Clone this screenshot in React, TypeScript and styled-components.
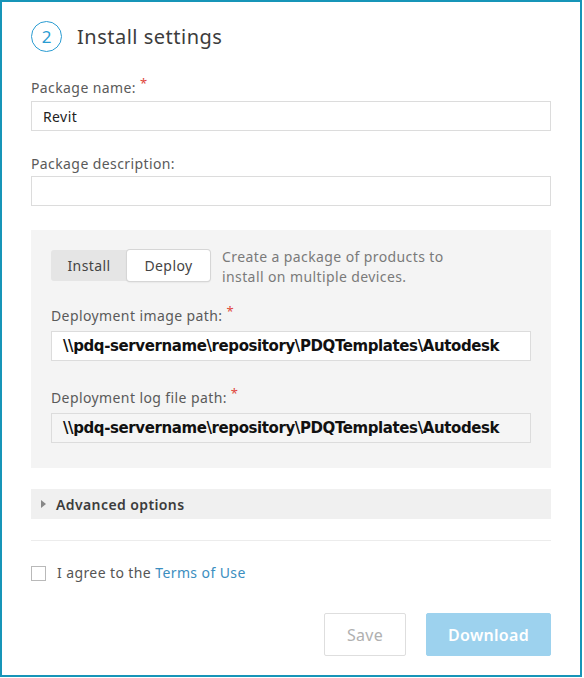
import React from "react";
import styled, { createGlobalStyle } from "styled-components";

const Global = createGlobalStyle`
  html, body { margin: 0; padding: 0; background: #fff; }
  body { font-family: "Noto Sans", "Open Sans", sans-serif; }
  * { box-sizing: border-box; }
`;

const Frame = styled.div`
  width: 582px;
  height: 677px;
  border: 2px solid #1795b8;
  padding: 19px 29px 0 29px;
  display: flex;
  flex-direction: column;
  background: #fff;
  letter-spacing: 0.4px;
`;

const Header = styled.div`
  display: flex;
  align-items: center;
  gap: 15px;
  height: 30px;
`;

const StepCircle = styled.div`
  width: 31px;
  height: 31px;
  border-radius: 50%;
  border: 1.5px solid #2a9cd2;
  color: #2a9cd2;
  display: flex;
  align-items: center;
  justify-content: center;
  font-size: 17px;
  letter-spacing: 0;
`;

const Title = styled.h2`
  margin: 0;
  font-size: 20px;
  font-weight: 400;
  color: #3c3c3c;
  letter-spacing: 0.5px;
`;

const Label = styled.div<{ $top: number; $gap?: number }>`
  margin-top: ${(p) => p.$top}px;
  margin-bottom: ${(p) => p.$gap ?? 3}px;
  font-size: 14px;
  line-height: 20px;
  height: 20px;
  color: #5a5a5a;
`;

const Req = styled.span`
  color: #e0463c;
  position: relative;
  top: -5px;
  margin-left: 4px;
  font-size: 13px;
  line-height: 0;
`;

const Input = styled.div<{ $bg?: string }>`
  height: 30px;
  border: 1px solid #dcdcdc;
  background: ${(p) => p.$bg || "#fff"};
  padding: 0 11px;
  display: flex;
  align-items: center;
  font-size: 14px;
  color: #222;
`;

const PathText = styled.span`
  font-family: "DejaVu Sans", sans-serif;
  font-weight: bold;
  font-size: 15px;
  color: #111;
  letter-spacing: -0.4px;
`;

const Panel = styled.div`
  margin-top: 24px;
  background: #f4f4f4;
  padding: 17px 20px 25px 20px;
  display: flex;
  flex-direction: column;
`;

const ToggleRow = styled.div`
  display: flex;
  align-items: flex-start;
  gap: 12px;
`;

const Segmented = styled.div`
  margin-top: 3px;
  display: flex;
  background: #e5e5e5;
  border-radius: 3px;
  height: 31px;
  flex: 0 0 159px;
`;

const Seg = styled.div<{ $active?: boolean }>`
  flex: ${(p) => (p.$active ? "0 0 83px" : "1")};
  display: flex;
  align-items: center;
  justify-content: center;
  font-size: 14px;
  color: #444;
  background: ${(p) => (p.$active ? "#fff" : "transparent")};
  border-radius: 3px;
  box-shadow: ${(p) => (p.$active ? "0 0 0 1px #d6d6d6, 0 1px 2px rgba(0,0,0,0.15)" : "none")};
`;

const Desc = styled.div`
  font-size: 14px;
  line-height: 20px;
  color: #7a7a7a;
`;

const Advanced = styled.div`
  margin-top: 21px;
  height: 30px;
  background: #f0f0f0;
  display: flex;
  align-items: center;
  padding-left: 10px;
  gap: 10px;
  font-size: 14px;
  font-weight: 600;
  color: #3c3c3c;
`;

const Caret = styled.span`
  width: 0;
  height: 0;
  border-top: 4px solid transparent;
  border-bottom: 4px solid transparent;
  border-left: 5px solid #888;
`;

const Divider = styled.div`
  margin-top: 21px;
  height: 1px;
  background: #ececec;
`;

const CheckRow = styled.label`
  margin-top: 22px;
  display: flex;
  align-items: center;
  gap: 11px;
  font-size: 14px;
  line-height: 20px;
  color: #555;
`;

const Box = styled.span`
  width: 15px;
  height: 15px;
  border: 1px solid #b9b9b9;
  background: #fff;
`;

const Link = styled.span`
  color: #3b8ec0;
`;

const Buttons = styled.div`
  margin-top: 30px;
  display: flex;
  justify-content: flex-end;
  gap: 20px;
`;

const Button = styled.button<{ $primary?: boolean }>`
  height: 43px;
  padding: 0;
  width: ${(p) => (p.$primary ? "125px" : "82px")};
  border-radius: 2px;
  border: 1px solid ${(p) => (p.$primary ? "#9dd2ee" : "#dedede")};
  background: ${(p) => (p.$primary ? "#9dd2ee" : "#fff")};
  color: ${(p) => (p.$primary ? "#fff" : "#b0b0b0")};
  font-family: "Noto Sans", "Open Sans", sans-serif;
  font-size: 16px;
  font-weight: ${(p) => (p.$primary ? 600 : 400)};
  letter-spacing: 0.3px;
`;

const path = "\\\\pdq-servername\\repository\\PDQTemplates\\Autodesk";

export default function App() {
  return (
    <>
      <Global />
      <Frame>
        <Header>
          <StepCircle>2</StepCircle>
          <Title>Install settings</Title>
        </Header>

        <Label $top={27} $gap={3}>
          Package name:<Req>*</Req>
        </Label>
        <Input>Revit</Input>

        <Label $top={23} $gap={2}>Package description:</Label>
        <Input />

        <Panel>
          <ToggleRow>
            <Segmented>
              <Seg>Install</Seg>
              <Seg $active>Deploy</Seg>
            </Segmented>
            <Desc>
              Create a package of products to
              <br />
              install on multiple devices.
            </Desc>
          </ToggleRow>

          <Label $top={19} $gap={5}>
            Deployment image path:<Req>*</Req>
          </Label>
          <Input>
            <PathText>{path}</PathText>
          </Input>

          <Label $top={27} $gap={5}>
            Deployment log file path:<Req>*</Req>
          </Label>
          <Input $bg="#f5f5f5">
            <PathText>{path}</PathText>
          </Input>
        </Panel>

        <Advanced>
          <Caret />
          Advanced options
        </Advanced>

        <Divider />

        <CheckRow>
          <Box />
          <span>
            I agree to the <Link>Terms of Use</Link>
          </span>
        </CheckRow>

        <Buttons>
          <Button>Save</Button>
          <Button $primary>Download</Button>
        </Buttons>
      </Frame>
    </>
  );
}
